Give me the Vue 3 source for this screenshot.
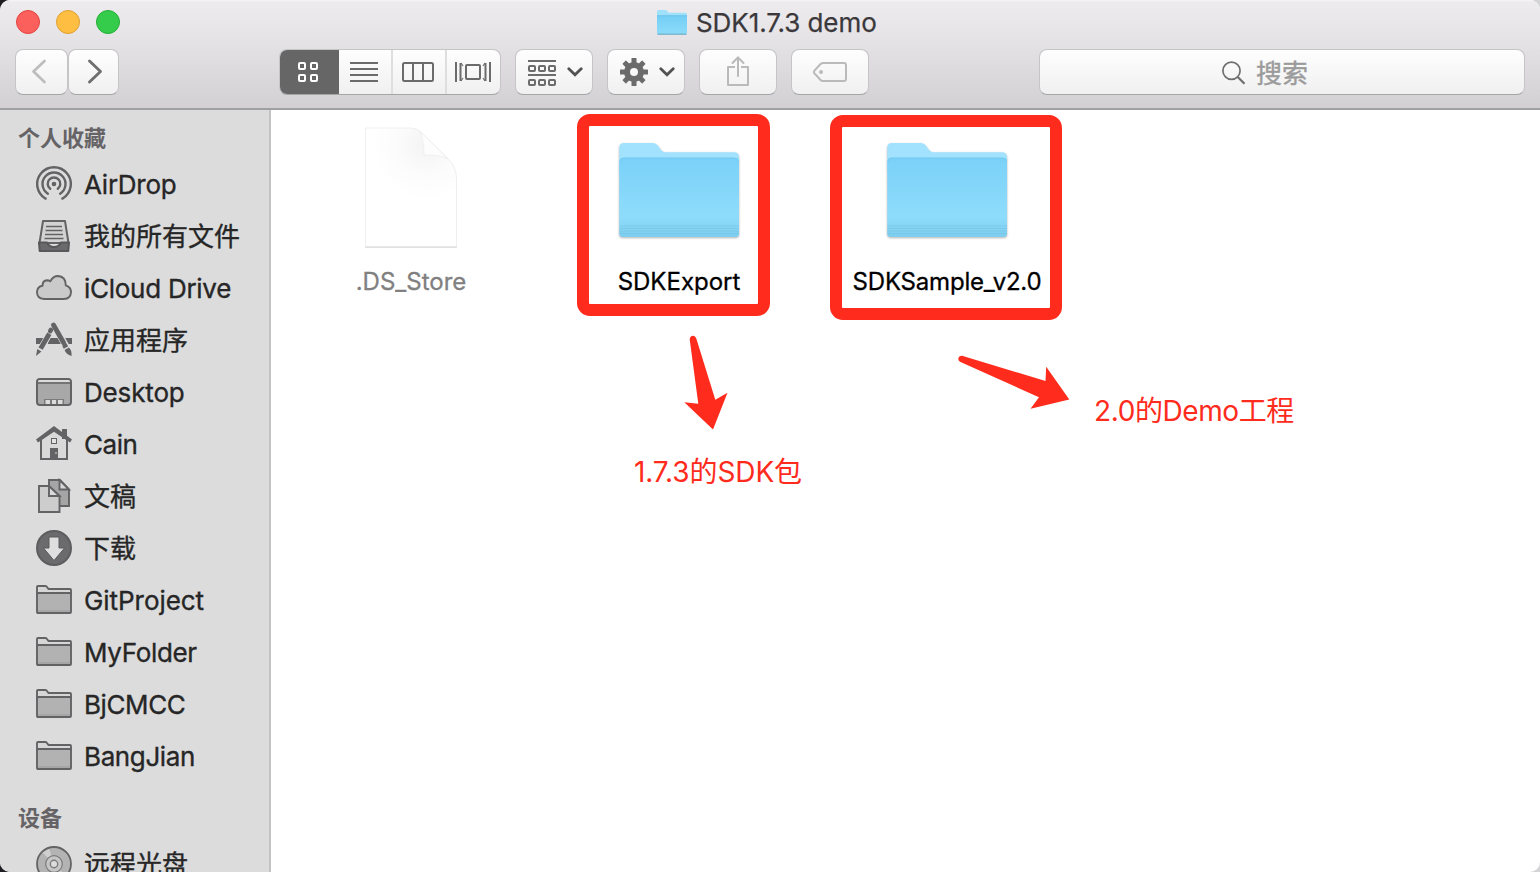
<script setup>
const places = [
  { name: 'AirDrop', icon: 'airdrop', ls: -0.25 },
  { name: '我的所有文件', icon: 'tray', cjk: true, ls: 0 },
  { name: 'iCloud Drive', icon: 'cloud', ls: -0.27 },
  { name: '应用程序', icon: 'apps', cjk: true, ls: 0 },
  { name: 'Desktop', icon: 'desktop', ls: -0.15 },
  { name: 'Cain', icon: 'home', ls: -0.45 },
  { name: '文稿', icon: 'docs', cjk: true, ls: 0 },
  { name: '下载', icon: 'download', cjk: true, ls: 0 },
  { name: 'GitProject', icon: 'folder', ls: -0.05 },
  { name: 'MyFolder', icon: 'folder', ls: -0.33 },
  { name: 'BjCMCC', icon: 'folder', ls: -0.4 },
  { name: 'BangJian', icon: 'folder', ls: -0.38 },
]
const devices = [{ name: '远程光盘', icon: 'disc', cjk: true, ls: 0 }]
const groups = [
  { title: '个人收藏', items: places },
  { title: '设备', items: devices },
]
const files = [
  { name: '.DS_Store', kind: 'file', ls: 0 },
  { name: 'SDKExport', kind: 'folder', ls: 0 },
  { name: 'SDKSample_v2.0', kind: 'folder', ls: -0.2 },
]
const teeth = [0, 45, 90, 135, 180, 225, 270, 315]
</script>

<template>
  <div class="window">
    <header class="chrome">
      <div class="titlebar">
        <div class="lights">
          <i class="light close"></i><i class="light mini"></i><i class="light full"></i>
        </div>
        <div class="title">
          <svg width="32" height="28" viewBox="0 0 32 28">
            <defs>
              <linearGradient id="tf" x1="0" y1="0" x2="0" y2="1">
                <stop offset="0" stop-color="#74cef5" /><stop offset="1" stop-color="#8cdcfa" />
              </linearGradient>
            </defs>
            <path d="M1 25.500V3.500Q1 2 2.500 2H9.500Q10.500 2 11.200 3L12.800 4.700H29.500Q31 4.700 31 6.200V25.500Z" fill="#9fe0fb" />
            <path d="M1 8H31V25Q31 26 30 26H2Q1 26 1 25Z" fill="url(#tf)" />
            <path d="M1 7.700H31" stroke="#5fbbe4" stroke-width=".8" />
            <path d="M1.500 26.200H30.500" stroke="#67aecb" stroke-width="1.200" />
          </svg>
          <span>SDK1.7.3 demo</span>
        </div>
      </div>
      <div class="toolbar">
        <div class="nav">
          <button class="btn back"><svg width="52" height="46" viewBox="0 0 52 46"><path d="M28.500 12L17.500 22.500L28.500 33" fill="none" stroke="#bdbdbd" stroke-width="2.700" stroke-linecap="round" stroke-linejoin="round" /></svg></button>
          <button class="btn fwd"><svg width="50" height="46" viewBox="0 0 50 46"><path d="M20.500 12L31.500 22.500L20.500 33" fill="none" stroke="#6f6f6f" stroke-width="2.900" stroke-linecap="round" stroke-linejoin="round" /></svg></button>
        </div>
        <div class="views btn">
          <span class="seg on">
            <svg width="20" height="20" viewBox="0 0 20 20" fill="none" stroke="#fff" stroke-width="2">
              <rect x="1" y="1" width="6" height="6" rx="1" /><rect x="13" y="1" width="6" height="6" rx="1" />
              <rect x="1" y="13" width="6" height="6" rx="1" /><rect x="13" y="13" width="6" height="6" rx="1" />
            </svg>
          </span>
          <span class="seg">
            <svg width="28" height="20" viewBox="0 0 28 20" stroke="#6b6b6b" stroke-width="2"><path d="M0 1H28M0 7H28M0 13H28M0 19H28" /></svg>
          </span>
          <span class="seg">
            <svg width="32" height="20" viewBox="0 0 32 20" fill="none" stroke="#6b6b6b" stroke-width="2"><rect x="1" y="1" width="30" height="18" rx="1.500" /><path d="M11 1V19M21 1V19" /></svg>
          </span>
          <span class="seg flow">
            <svg width="36" height="20" viewBox="0 0 36 20" fill="none" stroke="#6b6b6b" stroke-width="2">
              <path d="M1 0V20M35 0V20M5.500 1V19M30.500 1V19" /><path d="M6 1L8 4M6 19L8 16M30 1L28 4M30 19L28 16" stroke-width="1.200" /><rect x="11" y="3" width="14" height="14" rx="1" />
            </svg>
          </span>
        </div>
        <button class="btn wide">
          <svg class="grp" width="28" height="26" viewBox="0 0 28 26" fill="none" stroke="#6b6b6b" stroke-width="2">
            <path d="M0 1H28M0 15H28" />
            <rect x="1" y="6" width="6" height="5" rx="1" /><rect x="11" y="6" width="6" height="5" rx="1" /><rect x="21" y="6" width="6" height="5" rx="1" />
            <rect x="1" y="20" width="6" height="5" rx="1" /><rect x="11" y="20" width="6" height="5" rx="1" /><rect x="21" y="20" width="6" height="5" rx="1" />
          </svg>
          <svg class="chev" width="16" height="10" viewBox="0 0 16 10"><path d="M1.800 1.800L8 7.800L14.200 1.800" fill="none" stroke="#525252" stroke-width="2.800" stroke-linecap="round" /></svg>
        </button>
        <button class="btn wide">
          <svg class="gear" width="28" height="28" viewBox="-14 -14 28 28">
            <rect v-for="a in teeth" :key="a" x="-2.500" y="-14" width="5" height="7" rx=".6" fill="#6b6b6b" :transform="`rotate(${a})`" />
            <circle r="7" fill="none" stroke="#6b6b6b" stroke-width="6" />
          </svg>
          <svg class="chev" width="16" height="10" viewBox="0 0 16 10"><path d="M1.800 1.800L8 7.800L14.200 1.800" fill="none" stroke="#525252" stroke-width="2.800" stroke-linecap="round" /></svg>
        </button>
        <button class="btn wide mid">
          <svg class="share" width="22" height="30" viewBox="0 0 22 30" fill="none" stroke="#bababa" stroke-width="2"><path d="M8 11H1V29H21V11H14" stroke-linejoin="round" /><path d="M11 20V1.500M5.500 7L11 1.500L16.500 7" stroke-linecap="round" /></svg>
        </button>
        <button class="btn wide mid">
          <svg width="34" height="20" viewBox="0 0 34 20"><path d="M10 1H31Q33 1 33 3V17Q33 19 31 19H10Q8.500 19 7.300 17.700L1.300 11.200Q.4 10 1.300 8.800L7.300 2.300Q8.500 1 10 1Z" fill="none" stroke="#bababa" stroke-width="2" /><circle cx="8" cy="10" r="2" fill="#bababa" /></svg>
        </button>
        <div class="btn search">
          <svg width="24" height="24" viewBox="0 0 24 24" fill="none" stroke="#6e6e6e"><circle cx="9.500" cy="9.700" r="8.600" stroke-width="1.700" /><path d="M15.700 16L22.500 22.800" stroke-width="2.200" /></svg>
          <span>搜索</span>
        </div>
      </div>
    </header>

    <main class="body">
      <aside class="side">
        <section v-for="g in groups" :key="g.title" class="group">
          <h2>{{ g.title }}</h2>
          <div v-for="p in g.items" :key="p.name" class="place" :class="{ cjk: p.cjk }">
            <svg v-if="p.icon === 'airdrop'" width="36" height="36" viewBox="0 0 36 36" fill="none" stroke="#636365" stroke-width="2.400" stroke-linecap="round">
              <path d="M9.600 32.600A16.800 16.800 0 1 1 26.400 32.600" /><path d="M11.900 27.700A11.500 11.500 0 1 1 24.100 27.700" /><path d="M14.200 22.800A6.300 6.300 0 1 1 21.800 22.800" /><circle cx="18" cy="18" r="2.300" fill="#636365" stroke="none" />
            </svg>
            <svg v-else-if="p.icon === 'tray'" width="36" height="36" viewBox="0 0 36 36">
              <path d="M7 3H29L32.500 25H3.500Z" fill="#d2d2d2" stroke="#636365" stroke-width="2" stroke-linejoin="round" />
              <path d="M10 8.500H26M9.500 12.500H26.500M9 16.500H27M8.500 20.500H27.500" stroke="#636365" stroke-width="1.700" />
              <path d="M3 24.500H11Q13 29 18 29T25 24.500H33L32.300 33H3.700Z" fill="#6a6a6c" stroke="#58585a" stroke-width="2" stroke-linejoin="round" />
            </svg>
            <svg v-else-if="p.icon === 'cloud'" width="36" height="36" viewBox="0 0 36 36">
              <path d="M8 29Q1 28.600 1 22Q1.300 16.500 6.500 15.700Q6.500 10.500 11 10.200Q13 10.200 14.300 11.400Q17 6 22 6Q29.700 6.500 29.800 15.400Q35 17 35 22.300Q34.500 28.500 28 29Z" fill="#cacaca" stroke="#636365" stroke-width="1.900" stroke-linejoin="round" />
            </svg>
            <svg v-else-if="p.icon === 'apps'" width="36" height="36" viewBox="0 0 36 36">
              <path d="M0 16H36V22H0Z" fill="#636365" />
              <path d="M18 3L31.500 27M16 8L3 30" stroke="#dcdcdc" stroke-width="6.800" />
              <path d="M14.600 16L12.300 20.500V22H24L20.700 16Z" fill="#636365" />
              <path d="M17.500 3L27.600 20.800" stroke="#636365" stroke-width="4.800" stroke-linecap="round" />
              <path d="M28.300 22.500L30 25.500" stroke="#636365" stroke-width="5" />
              <path d="M28.600 28L32.800 25.600Q36 28.500 35.600 34Q30 32.500 28.600 28Z" fill="#636365" />
              <path d="M14.900 8L14.200 9.200" stroke="#636365" stroke-width="4.600" stroke-linecap="round" />
              <path d="M13.300 11.800L4.600 26.600" stroke="#636365" stroke-width="4.800" />
              <path d="M1.300 27L5.400 29.400L0 34Z" fill="#636365" />
            </svg>
            <svg v-else-if="p.icon === 'desktop'" width="36" height="36" viewBox="0 0 36 36">
              <rect x="1" y="5" width="34" height="26" rx="3" fill="#a8a8a9" stroke="#636365" stroke-width="2" />
              <path d="M2 8Q2 6 4 6H32Q34 6 34 8Z" fill="#dcdcdc" /><path d="M1 9H35" stroke="#636365" stroke-width="1.600" />
              <path d="M8 25H28V30H8Z" fill="#7b7b7c" /><path d="M9.500 26H14V30H9.500ZM16 26H20V30H16ZM22 26H26.500V30H22Z" fill="#dcdcdc" />
            </svg>
            <svg v-else-if="p.icon === 'home'" width="36" height="36" viewBox="0 0 36 36">
              <path d="M5 13L18 3L31 13V33H5Z" fill="#d9d9d9" stroke="#636365" stroke-width="2" />
              <path d="M26 3H31V13H26Z" fill="#636365" />
              <path d="M0 13.500L18 0L36 13.500L34 16.500L18 5.800L2 16.500Z" fill="#636365" />
              <rect x="15.500" y="12.500" width="5" height="5" fill="#e4e4e4" stroke="#636365" />
              <path d="M14 22H22V33H14Z" fill="#636365" /><path d="M20 26V28" stroke="#ddd" />
            </svg>
            <svg v-else-if="p.icon === 'docs'" width="36" height="36" viewBox="0 0 36 36" stroke="#636365" stroke-width="1.900">
              <path d="M13 2H24L33 11.500V28H13Z" fill="#a5a5a6" /><path d="M23.500 2V11.500H33Z" fill="#d6d6d6" />
              <path d="M3 8H13L23.500 18V34H3Z" fill="#cdcdcd" /><path d="M13 8V18H23.500Z" fill="#dadada" />
            </svg>
            <svg v-else-if="p.icon === 'download'" width="36" height="36" viewBox="0 0 36 36">
              <circle cx="18" cy="18" r="17" fill="#6b6b6d" stroke="#5d5d5f" stroke-width="2" />
              <path d="M13 7H23V18H28.500L18 30.500L7.500 18H13Z" fill="#dedede" stroke="#5a5a5c" stroke-width="1" />
            </svg>
            <svg v-else-if="p.icon === 'folder'" width="36" height="36" viewBox="0 0 36 36">
              <path d="M1 30V5Q1 4 2 4H9.500Q10.500 4 11 5L12.500 7H34Q35 7 35 8V30Q35 31 34 31H2Q1 31 1 30Z" fill="#d6d6d6" />
              <path d="M1.500 11H34.500V30H1.500Z" fill="#b2b2b3" /><path d="M2 29H34" stroke="#a2a2a3" stroke-width="1.500" />
              <path d="M1 12.500Q1 11 2.500 11H33.500Q35 11 35 12.500" fill="none" stroke="#636365" stroke-width="1.800" />
              <path d="M1 30V5Q1 4 2 4H9.500Q10.500 4 11 5L12.500 7H34Q35 7 35 8V30Q35 31 34 31H2Q1 31 1 30Z" fill="none" stroke="#636365" stroke-width="1.900" />
            </svg>
            <svg v-else width="36" height="36" viewBox="0 0 36 36">
              <circle cx="18" cy="18" r="17" fill="#b3b3b4" />
              <path d="M18 18L6 6Q9 3 13 2ZM18 18L30 30Q27 33 23 34Z" fill="#d0d0d0" />
              <circle cx="18" cy="18" r="17" fill="none" stroke="#636365" stroke-width="1.800" />
              <circle cx="18" cy="18" r="8.300" fill="#c6c6c7" stroke="#7b7b7d" stroke-width="1.200" />
              <circle cx="18" cy="18" r="3.700" fill="#dcdcdc" stroke="#7b7b7d" stroke-width="1.400" />
            </svg>
            <span :style="{ letterSpacing: p.ls + 'px' }">{{ p.name }}</span>
          </div>
        </section>
      </aside>

      <section class="files">
        <div v-for="f in files" :key="f.name" class="file" :class="f.kind">
          <svg v-if="f.kind === 'file'" width="128" height="128" viewBox="0 0 128 128">
            <defs>
              <radialGradient id="pg" gradientUnits="userSpaceOnUse" cx="80" cy="22" r="55">
                <stop offset="0" stop-color="#f3f3f3" /><stop offset=".5" stop-color="#fbfbfb" /><stop offset="1" stop-color="#fff" />
              </radialGradient>
            </defs>
            <path d="M18.500 5H64Q70 5 75 10L101 35.500Q109.500 44 109.500 56V123.500H18.500Z" fill="url(#pg)" stroke="#efefef" />
            <path d="M18 124.300H110" stroke="#e2e2e2" stroke-width="1.400" />
            <path d="M72 7.500Q77 14 77 32H83Q94 32 101 36Z" fill="#fdfdfd" stroke="#ededed" stroke-width=".8" />
          </svg>
          <svg v-else width="128" height="128" viewBox="0 0 128 128">
            <defs>
              <linearGradient id="ff" x1="0" y1="0" x2="0" y2="1">
                <stop offset="0" stop-color="#7ad1f8" /><stop offset=".75" stop-color="#8edcfb" /><stop offset=".85" stop-color="#88d6f5" /><stop offset="1" stop-color="#7ccdee" />
              </linearGradient>
            </defs>
            <g class="shade">
              <path d="M4.300 50V25Q4.300 20 9 20H38Q41 20 43 22.800L46 27Q48 29.300 51 29.300H119Q124 29.300 124 34V50Z" fill="#a3e2ff" />
              <path d="M4.300 39Q4.300 34.700 8.500 34.700H119.500Q124 34.700 124 39V110.500Q124 114 120.500 114H7.800Q4.300 114 4.300 110.500Z" fill="url(#ff)" />
            </g>
            <path d="M5 38.500Q5 35 8.500 35H119.500Q123.500 35 123.500 38.500" fill="none" stroke="#71c6ec" stroke-width=".8" />
            <path d="M4.500 103H124M4.500 105.500H124M4.500 108H124M4.500 110.500H124" stroke="#6dbfe2" stroke-width=".7" opacity=".7" />
          </svg>
          <span :style="{ letterSpacing: f.ls + 'px' }">{{ f.name }}</span>
        </div>
      </section>
    </main>

    <div class="mark m1"></div>
    <div class="mark m2"></div>
    <svg class="arrows" width="400" height="110" viewBox="680 330 400 110" fill="#ff2b1c">
      <path d="M689.700 339.500Q690 335.700 693 335.700Q695.500 335.700 696.300 338.500L715.300 399.700L727.500 392.700L713 429.600L684.300 402.200L698.300 403.700Z" />
      <path d="M962 355.800L1045.500 381L1046.200 366.800L1069.300 399.500L1030.500 408.700L1039 397.200L960.500 362Q958 361 958.300 358.300Q959 355.400 962 355.800Z" />
    </svg>
    <div class="note n1">1.7.3的SDK包</div>
    <div class="note n2">2.0的Demo工程</div>
  </div>
</template>

<style>
body { background: linear-gradient(90deg, #1f1e22 50%, #d4d4d6 50%); }
</style>

<style scoped>
.window {
  position: relative; width: 1540px; height: 872px; overflow: hidden; display: flex; flex-direction: column;
  border-radius: 10px; background: #fff; font-family: Inter, "Noto Sans CJK SC", sans-serif; color: #262626;
}
.chrome {
  box-sizing: border-box; height: 110px; flex: none; border-bottom: 2px solid #a09fa1;
  background: linear-gradient(#f7f6f7 0, #edebed 2px, #e6e4e7 35px, #d2d0d3 100%);
}
.titlebar { display: flex; align-items: center; height: 44px; padding-left: 16px; }
.lights { display: flex; gap: 16px; }
.light { width: 24px; height: 24px; border-radius: 50%; box-sizing: border-box; border: 1px solid; }
.close { background: #fc605c; border-color: #e2443f; }
.mini { background: #fdbe41; border-color: #dfa033; }
.full { background: #35cb4b; border-color: #24ad36; }
.title { display: flex; align-items: center; gap: 8px; margin-left: 536px; font-size: 26px; letter-spacing: -.08px; color: #3a383b; white-space: nowrap; -webkit-text-stroke: .25px; }
.toolbar { display: flex; align-items: center; height: 46px; padding: 5px 15px 0; }
.btn {
  box-sizing: border-box; height: 46px; border: 1px solid #c5c4c6; border-bottom-color: #a6a5a7; border-radius: 8px; padding: 0;
  background: linear-gradient(#fefefe, #f0f0f0); display: flex; align-items: center; font: inherit; flex: none;
}
.btn svg { display: block; flex: none; }
.nav { display: flex; margin-right: 160px; }
.back { width: 53px; } .fwd { width: 51px; }
.back, .fwd { justify-content: center; }
.views { width: 222px; margin-right: 14px; overflow: hidden; }
.seg { height: 100%; display: flex; align-items: center; justify-content: center; width: 54px; box-sizing: border-box; border-left: 2px solid #dedede; padding-right: 2px; flex: none; }
.seg.on { width: 60px; background: #666; border: 0; margin: -1px 0 -1px -1px; height: 46px; }
.seg:nth-child(2) { border-left: 0; width: 52px; }
.seg.flow { padding-right: 0; }
.wide { width: 78px; margin-right: 14px; padding-left: 12px; }
.mid { justify-content: center; padding: 0; }
.chev { margin-left: 11px; }
.grp { margin-top: 2px; }
.share { margin-top: -3px; }
.search { width: 486px; margin-left: 156px; padding-left: 182px; gap: 10px; font-size: 26px; color: #9b9b9b; -webkit-text-stroke: .4px; }
.search svg { margin-top: 2px; }
.search span { margin-top: -2px; }
.body { display: flex; flex: 1; min-height: 0; }
.side { box-sizing: border-box; width: 271px; margin-right: 1px; border-right: 2px solid #c3c3c3; background: #dcdcdc; padding-top: 8px; overflow: hidden; flex: none; }
.group + .group { margin-top: 16px; }
h2 { margin: 0; height: 40px; line-height: 40px; padding-left: 18px; font-size: 22px; font-weight: 700; color: #656366; }
.place { height: 52px; display: flex; align-items: center; padding-left: 36px; gap: 12px; font-size: 26px; white-space: nowrap; -webkit-text-stroke: .35px; }
.place svg { flex: none; }
.place.cjk span { margin-top: -4px; }
.files { display: grid; grid-template-columns: repeat(3, 268px); align-content: start; padding: 13px 0 0 5px; flex: 1; }
.file { display: flex; flex-direction: column; align-items: center; font-size: 24px; color: #000; -webkit-text-stroke: .3px; }
.file span { line-height: 30px; margin-top: 16px; white-space: nowrap; }
.file:first-child { color: #808080; }
.shade { filter: drop-shadow(0 1px 1px rgba(0, 0, 0, .3)); }
.mark { position: absolute; box-sizing: border-box; border: 12px solid #ff2b1c; border-radius: 13px; }
.m1 { left: 577px; top: 114px; width: 193px; height: 202px; }
.m2 { left: 830px; top: 115px; width: 232px; height: 205px; }
.arrows { position: absolute; left: 680px; top: 330px; }
.note { position: absolute; font-size: 28px; line-height: 40px; color: #ff2b1c; white-space: nowrap; }
.n1 { left: 634px; top: 452px; letter-spacing: -.1px; }
.n2 { left: 1094px; top: 391px; letter-spacing: -.4px; }
</style>
